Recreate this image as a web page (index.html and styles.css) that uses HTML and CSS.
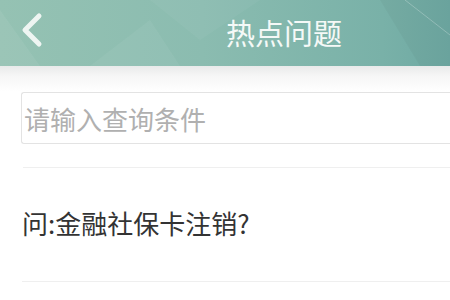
FILE: index.html
```html
<!DOCTYPE html>
<html lang="zh-CN">
<head>
  <meta charset="UTF-8" />
  <meta name="viewport" content="width=device-width, initial-scale=1.0"/>
  <title>热点问题</title>
  <link rel="stylesheet" href="styles.css">
</head>
<body>
  <div class="page">
    <header class="topbar">
      <svg class="deco" width="450" height="66" viewBox="0 0 450 66">
        <polygon points="0,10 40,66 0,66" fill="rgba(255,255,255,0.06)"/>
        <polygon points="90,66 150,20 180,66" fill="rgba(255,255,255,0.05)"/>
        <polygon points="150,0 260,0 200,40" fill="rgba(255,255,255,0.04)"/>
        <polygon points="380,0 450,0 450,66 420,66" fill="rgba(0,0,0,0.03)"/>
        <line x1="405" y1="0" x2="450" y2="35" stroke="rgba(255,255,255,0.25)" stroke-width="1"/>
      </svg>
      <a class="back" href="#">
        <svg width="24" height="36" viewBox="0 0 24 36">
          <polyline points="19,4 5,18 19,32" fill="none" stroke="#eef5f2" stroke-width="5" stroke-linecap="round" stroke-linejoin="round"/>
        </svg>
      </a>
      <h1>热点问题</h1>
    </header>

    <section class="search">
      <input type="text" placeholder="请输入查询条件" />
    </section>
    <div class="divider"></div>

    <ul class="questions">
      <li>问:金融社保卡注销?</li>
    </ul>
  </div>
</body>
</html>
```

FILE: styles.css
```css
body {
  margin: 0;
  padding: 0;
  background: #fff;
  overflow: hidden;
  font-family: "Noto Sans CJK SC", "Noto Sans", sans-serif;
}

.page {
  width: 100%;
}

.topbar {
  position: relative;
  height: 66px;
  background: linear-gradient(90deg, #95c2b3 0%, #8bbcb0 45%, #79b1a8 85%, #6ea9a3 100%);
  display: flex;
  align-items: center;
  justify-content: center;
  overflow: hidden;
}

.deco {
  position: absolute;
  top: 0;
  left: 0;
}

.back {
  position: absolute;
  left: 20px;
  top: 12px;
  display: block;
  width: 24px;
  height: 36px;
}

.topbar h1 {
  position: relative;
  margin: -2px 0 0 118px;
  font-size: 29px;
  font-weight: normal;
  color: #f5f9f7;
  line-height: 1;
}

.search {
  background: linear-gradient(#e9eaea 0px, #f6f6f6 10px, #fff 26px);
  padding: 26px 0 23px 21px;
}

.search input {
  display: block;
  box-sizing: border-box;
  width: 100%;
  height: 52px;
  padding: 0 2px;
  border: 1px solid #e3e3e3;
  border-right: none;
  border-radius: 3px 0 0 3px;
  background: #fff;
  font-family: "Noto Sans CJK SC", sans-serif;
  font-size: 26px;
  color: #333;
  outline: none;
}

.search input::placeholder {
  color: #b0b0b0;
}

.divider {
  margin-left: 23px;
  border-top: 1px solid #efefef;
}

.questions {
  list-style: none;
  margin: 0;
  padding: 0;
}

.questions li {
  box-sizing: border-box;
  height: 114px;
  padding-bottom: 4px;
  margin-left: 22px;
  display: flex;
  align-items: center;
  font-size: 26px;
  color: #333;
  border-bottom: 1px solid #efefef;
}
```
